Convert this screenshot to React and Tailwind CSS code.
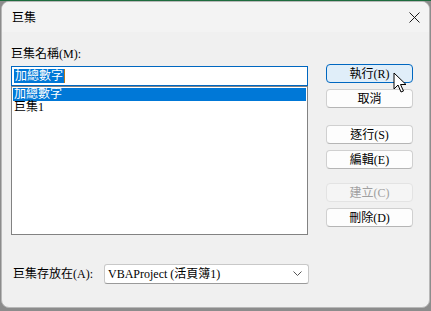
import React from "react";

const cjk = { fontFamily: '"Liberation Serif", "Noto Sans CJK TC", serif' };

function Btn({ children, primary, disabled, className = "" }) {
  let look = "border-[#d0d0d0] border-b-[#b5b5b5] bg-[#fdfdfd] text-black";
  if (primary) look = "border-[#0067c0] bg-[#e0eef9] text-black";
  if (disabled) look = "border-[#e3e3e3] bg-[#f5f5f5] text-[#a0a0a0]";
  return (
    <div
      className={`h-[19px] w-[87px] rounded-[4px] border flex items-center justify-center text-[12px] leading-none ${look} ${className}`}
    >
      {children}
    </div>
  );
}

export default function App() {
  return (
    <div className="w-[431px] h-[311px] bg-[#8c8c8c] border-t border-[#1d6b3d] overflow-hidden" style={cjk}>
      <div className="relative ml-[1px] w-[429px] h-[307px] rounded-[8px] bg-[#f0f0f0] border border-[#b8b8b8] overflow-hidden">
        {/* title bar */}
        <div className="h-[30px] flex items-center justify-between pl-[10px] pr-[9px] bg-[#f3f3f3]">
          <span className="text-[12px] text-black" style={{ fontFamily: '"Noto Sans CJK TC", sans-serif' }}>
            巨集
          </span>
          <svg width="11" height="11" viewBox="0 0 11 11">
            <path d="M0.5 0.5 L10.5 10.5 M10.5 0.5 L0.5 10.5" stroke="#1a1a1a" strokeWidth="1" />
          </svg>
        </div>

        <div className="flex pl-[9px] pt-[15px]">
          {/* left column */}
          <div className="w-[297px]">
            <div className="h-[14px] text-[12px] leading-[14px] text-black">巨集名稱(M):</div>
            <div className="mt-[5px] h-[20px] border border-[#0067c0] bg-white flex items-center pl-[2px]">
              <span className="bg-[#0078d7] text-white text-[12px] leading-[14px] px-[1px]">加總數字</span>
              <span className="w-[1px] h-[14px] bg-[#b8761b]" />
            </div>
            <div className="h-[149px] border border-[#828282] bg-white px-[1px] pt-[1px]">
              <div className="h-[13px] bg-[#0078d7] text-white text-[12px] leading-[13px] pl-[1px]">加總數字</div>
              <div className="h-[13px] text-black text-[12px] leading-[13px] pl-[1px]">巨集1</div>
            </div>
          </div>

          {/* right buttons */}
          <div className="ml-[18px] pt-[17px] flex flex-col">
            <Btn primary>執行(R)</Btn>
            <Btn className="mt-[6px]">取消</Btn>
            <Btn className="mt-[17px]">逐行(S)</Btn>
            <Btn className="mt-[6px]">編輯(E)</Btn>
            <Btn disabled className="mt-[14px]">建立(C)</Btn>
            <Btn className="mt-[6px]">刪除(D)</Btn>
          </div>
        </div>

        {/* bottom row */}
        <div className="flex items-center pl-[11px] mt-[29px]">
          <span className="w-[91px] text-[12px] text-black">巨集存放在(A):</span>
          <div className="w-[205px] h-[20px] border border-[#c8c8c8] border-b-[#9a9a9a] rounded-[3px] bg-white flex items-center justify-between pl-[3px] pr-[6px]">
            <span className="text-[12px] text-black leading-none">VBAProject (活頁簿1)</span>
            <svg width="9" height="6" viewBox="0 0 9 6">
              <path d="M0.5 0.5 L4.5 4.5 L8.5 0.5" fill="none" stroke="#555" strokeWidth="1" />
            </svg>
          </div>
        </div>

        {/* mouse cursor */}
        <svg className="absolute left-[391px] top-[70px]" width="14" height="22" viewBox="0 0 14 22">
          <path
            d="M1 1 L1 17 L5 13 L8 20 L10.5 19 L7.5 12.5 L13 12.5 Z"
            fill="white"
            stroke="black"
            strokeWidth="1"
            strokeLinejoin="round"
          />
        </svg>
      </div>
    </div>
  );
}
